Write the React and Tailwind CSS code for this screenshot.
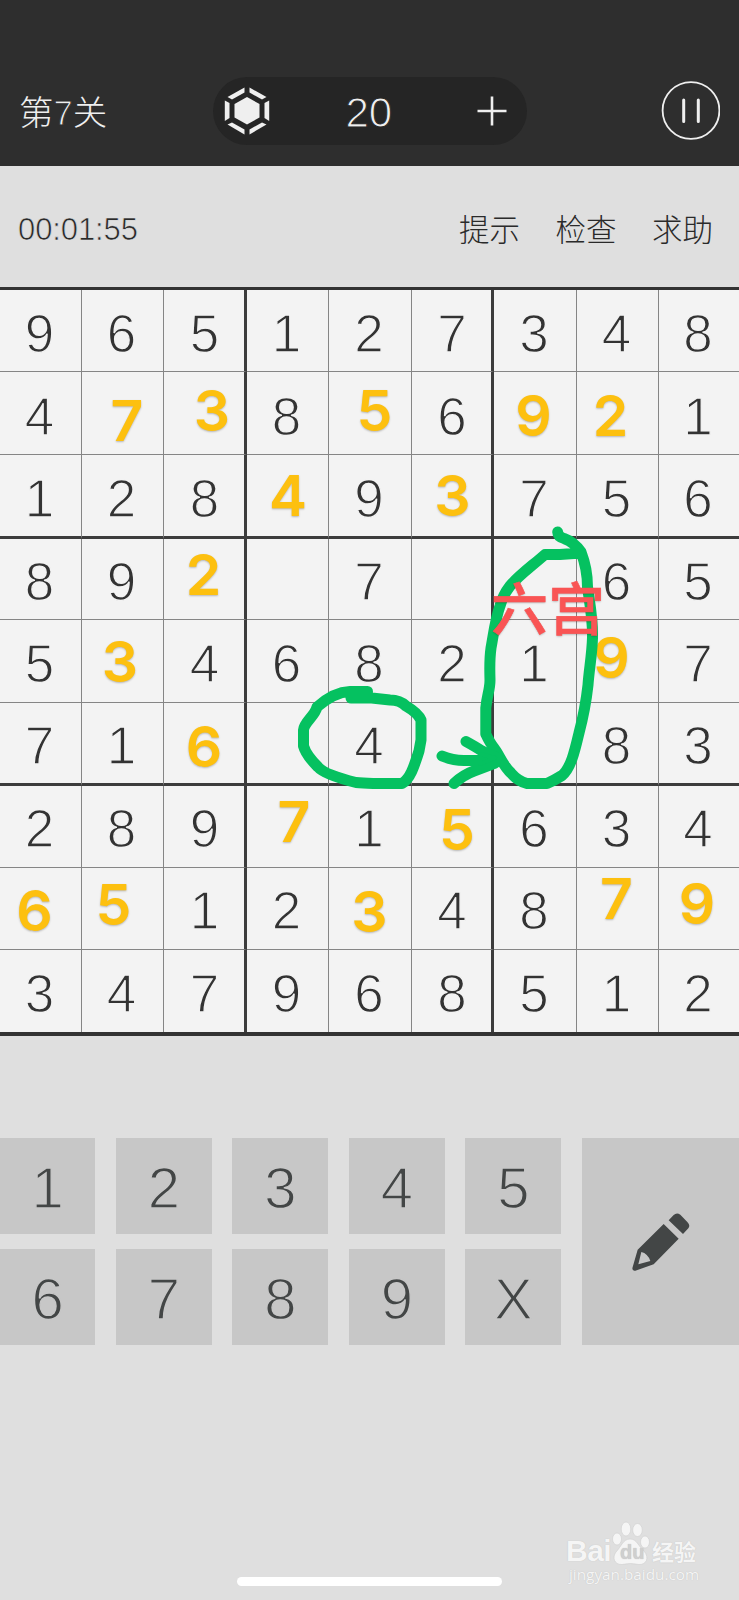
import React from "react";

const BOARD = [
  "965127348",
  "4  8 6  1",
  "128 9 756",
  "89  7  65",
  "5 46821 7",
  "71  4  83",
  "289 1 634",
  "  12 48  ",
  "347968512",
];

const KEYS = ["1", "2", "3", "4", "5", "6", "7", "8", "9", "X"];

// Answers placed freely over the board, x / y are the digit centers
const ANSWERS = [
  { n: 7, x: 127, y: 420 },
  { n: 3, x: 212, y: 409.5 },
  { n: 5, x: 374.5, y: 409.5 },
  { n: 4, x: 288, y: 494.5 },
  { n: 3, x: 452.5, y: 494.5 },
  { n: 9, x: 533.5, y: 414.5 },
  { n: 2, x: 610.5, y: 415 },
  { n: 2, x: 203.5, y: 574 },
  { n: 3, x: 120, y: 660.5 },
  { n: 9, x: 611.5, y: 657 },
  { n: 6, x: 204, y: 746 },
  { n: 7, x: 294, y: 821 },
  { n: 5, x: 457, y: 829 },
  { n: 6, x: 34.5, y: 910 },
  { n: 5, x: 113.5, y: 903.5 },
  { n: 3, x: 369.5, y: 911 },
  { n: 7, x: 616.5, y: 898 },
  { n: 9, x: 697, y: 903 },
];

const GemIcon = () => (
  <svg width="46" height="50" viewBox="0 0 46 50" fill="#efefef">
    <path d="M23 11 35.5 18V31.5L23 38.5 10.5 31.5V18Z" />
    <path d="M20.5 1.500V6.500L8 13.500 3.500 11Z" />
    <path d="M25.5 1.500V6.500L38 13.500 42.500 11Z" />
    <path d="M20.5 48.5V43.5L8 36.5 3.500 38.5Z" />
    <path d="M25.5 48.5V43.5L38 36.5 42.500 38.5Z" />
    <path d="M.8 14.500 5.5 17V32L.8 35Z" />
    <path d="M45.2 14.500 40.5 17V32L45.2 35Z" />
  </svg>
);

const PencilIcon = () => (
  <svg width="58" height="58" viewBox="0 0 174 174" fill="#434646">
    <path d="M110 22 125 6Q134-3 145 5L166 27Q176 37 169 46L153 63Z" />
    <path
      fillRule="evenodd"
      d="M95 33 140 77 65 154 10 173Q1 175 1 166L17 110ZM28 117 19 154 55 144Q47 121 28 117Z"
    />
  </svg>
);

const Header = () => (
  <header className="h-[166px] bg-[#2e2e2e] flex items-center pt-[56px] pl-[19px] pr-[19px] text-[#efefef]">
    <div className="w-[193.5px] text-[34.500px] leading-none font-light pt-[4px]">
      第<span className="font-normal [-webkit-text-stroke:1px_#2e2e2e]">7</span>关
    </div>
    <div className="w-[314px] h-[68px] rounded-full bg-[#252525] flex items-center pl-[11px] pr-[20px]">
      <GemIcon />
      <span className="w-[46px] ml-[76px] mt-[3px] text-center text-[42px] leading-none [-webkit-text-stroke:1px_#252525]">
        20
      </span>
      <svg width="30" height="30" className="ml-auto" stroke="#efefef" strokeWidth="2.6">
        <path d="M0.5 15H29.5M15 .5V29.5" />
      </svg>
    </div>
    <svg width="60" height="60" className="ml-auto" fill="none" stroke="#efefef">
      <circle cx="31" cy="29.500" r="28.4" strokeWidth="1.8" />
      <path d="M23.700 19V40.500M38.300 19V40.500" strokeWidth="3" strokeLinecap="round" />
    </svg>
  </header>
);

const Toolbar = () => (
  <div className="h-[121px] flex items-center justify-between pl-[18px] pr-[26px] pt-[6px] text-[#2a2a2a]">
    <span className="text-[31px] leading-none tracking-[-0.1px] -mt-[1px] [-webkit-text-stroke:0.7px_#dfdfdf]">
      00:01:55
    </span>
    <div className="flex gap-[35.5px] pt-[1px] text-[30.500px] leading-none font-light">
      <span>提示</span>
      <span>检查</span>
      <span>求助</span>
    </div>
  </div>
);

const Cell = ({ value, row, col }) => {
  const right =
    col === 8
      ? ""
      : col % 3 === 2
        ? "border-r-[3px] border-r-[#3c3c3c]"
        : "border-r border-r-[#858585]";
  const bottom =
    row === 8
      ? ""
      : row % 3 === 2
        ? "border-b-[3px] border-b-[#3c3c3c]"
        : "border-b border-b-[#858585]";
  const shiftX = col === 2 || col === 5 ? "pl-[1px]" : "pr-[2px]";
  const shiftY = row < 3 ? "pt-[6px]" : "pt-[4px]";

  return (
    <div
      className={`flex items-center justify-center text-[53px] leading-none text-[#333] [-webkit-text-stroke:1.3px_#f3f3f3] ${shiftX} ${shiftY} ${right} ${bottom}`}
    >
      {value.trim()}
    </div>
  );
};

const Board = () => (
  <div className="border-t-[3px] border-b-4 border-[#333] bg-[#f3f3f3] grid grid-cols-[82px_82px_83px_82px_83px_82px_83px_82px_80px] grid-rows-[82px_83px_84px_81px_83px_83px_82px_82px_82px]">
    {BOARD.map((line, row) =>
      line
        .split("")
        .map((value, col) => (
          <Cell key={`${row}-${col}`} value={value} row={row} col={col} />
        ))
    )}
  </div>
);

const Keypad = () => (
  <div className="mt-[102px] flex gap-[20.5px]">
    <div className="grid grid-cols-[95.300px_96px_96px_96px_96.200px] grid-rows-[96px_96px] gap-x-[20.5px] gap-y-[15px]">
      {KEYS.map((key) => (
        <button
          key={key}
          type="button"
          className="bg-[#c7c7c7] pt-[4px] text-[58px] leading-none text-[#434646] [-webkit-text-stroke:1.4px_#c7c7c7]"
        >
          {key}
        </button>
      ))}
    </div>
    <button
      type="button"
      className="flex-1 bg-[#c7c7c7] flex items-center justify-center pl-[1px]"
    >
      <PencilIcon />
    </button>
  </div>
);

// Hand drawn marks and answers lying on top of the board
const Annotations = () => (
  <div className="absolute inset-0 pointer-events-none">
    {ANSWERS.map(({ n, x, y }) => (
      <span
        key={`${x}-${y}`}
        className="absolute -translate-x-1/2 -translate-y-1/2 text-[57px] leading-none font-semibold font-['Inter',sans-serif] text-[#fdc00f] [text-shadow:0_1px_2px_rgba(0,0,0,0.25)]"
        style={{ left: x, top: y }}
      >
        {n}
      </span>
    ))}
    <svg
      className="absolute inset-0"
      width="739"
      height="1600"
      fill="none"
      stroke="#05c160"
      strokeWidth="11"
      strokeLinecap="round"
      strokeLinejoin="round"
    >
      <path d="M557.700 532Q558 537 564 538.500Q574 542 581 552C586 565 587.500 575 587.500 587C590 605 593 620 592.500 638C592 655 589 670 588 685C586 703 583 718 579 733C575 750 571 768 562 775.500Q555 780 547 783.500H527Q518 781 511 773C503 766 499 754 494 748Q490 743 485.800 734V708C487 695 490 690 490 680C489.500 665 490 655 491 648C494 632 495 620 500 606Q503 595 510 586C518 576 532 566 545 554.500H560L581 553" />
      <path d="M367.500 691.500H350C338 692 326 699 317 707C315 716 304 722 303.500 730V746Q306 755 318 767C324 774 342 779 356 782.500Q362 783 373 783.500H402C410 779 414 767 419 751L421 740V720Q418 713 406 706Q400 700 390 700L371.700 698H351M352 695H368" />
      <path d="M442 756Q454 761 466 760.500H493M466 741.500Q476 747 482 751L497 758M454 783.500Q463 775 474 771L495 763" />
      <path d="M480 754 495 758 480 764Z" fill="#05c160" strokeWidth="4" />
    </svg>
    <span className="absolute left-[491px] top-[582px] text-[57px] leading-[57px] font-medium text-[#f95454] whitespace-nowrap [-webkit-text-stroke:0.6px_#f95454] [text-shadow:0_1px_2px_rgba(0,0,0,0.25)]">
      六宫
    </span>
  </div>
);

const Watermark = () => (
  <div className="absolute left-[566px] top-[1520px] w-[140px] text-[#f5f5f5] leading-none [text-shadow:0_0_1px_#bbb]">
    <div className="flex items-end h-[46px]">
      <span className="w-[46px] text-[30px] tracking-[-0.5px] font-bold">Bai</span>
      <div className="relative w-[38px] h-[45px]">
        <svg width="38" height="45" fill="#f5f5f5" stroke="#cfcfcf" strokeWidth=".6">
          <ellipse cx="5" cy="18" rx="4.500" ry="6" />
          <ellipse cx="14" cy="8" rx="4.800" ry="7" />
          <ellipse cx="25.500" cy="9" rx="4.800" ry="6.500" />
          <ellipse cx="33" cy="21" rx="4.500" ry="6" />
          <path d="M18 18C25 18 26 25 32 30C38 37 34 44 27 43.500Q18 41.500 10 43.500C2 44 0 36 4 31C9 26 11 18 18 18Z" />
        </svg>
        <span className="absolute left-[8px] top-[21px] text-[20px] font-bold text-[#cfcfcf]">
          du
        </span>
      </div>
      <span className="ml-[2px] pb-[2px] text-[22px] font-bold">经验</span>
    </div>
    <div className="pl-[3px] text-[15.300px] leading-[17px] font-['Open_Sans',sans-serif] whitespace-nowrap">
      jingyan.baidu.com
    </div>
  </div>
);

export default function App() {
  return (
    <div className="relative w-[739px] h-[1600px] overflow-hidden bg-[#dfdfdf] flex flex-col font-['Liberation_Sans','Noto_Sans_CJK_SC',sans-serif]">
      <Header />
      <Toolbar />
      <Board />
      <Keypad />
      <div className="mt-auto mb-[14px] ml-[237px] w-[265px] h-[9px] rounded-full bg-white" />
      <Annotations />
      <Watermark />
    </div>
  );
}
